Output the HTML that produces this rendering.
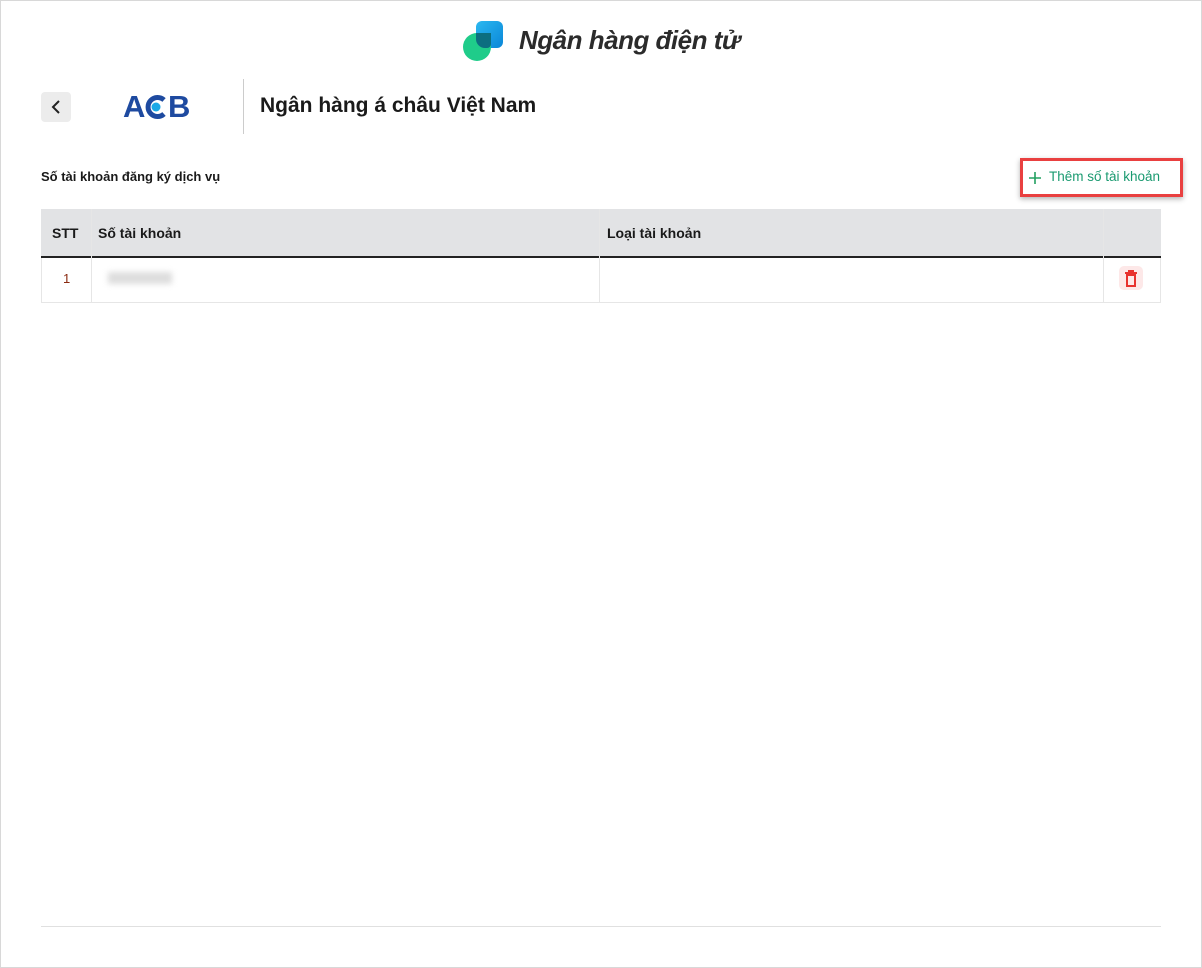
<!DOCTYPE html>
<html><head><meta charset="utf-8"><style>
*{box-sizing:border-box;margin:0;padding:0}
body{width:1202px;height:968px;background:#fff;font-family:"Liberation Sans","DejaVu Sans",sans-serif;position:relative;overflow:hidden;color:#1a1a1a}
.abs{position:absolute}
</style></head><body>
<div class="abs" style="left:0;top:0;width:1202px;height:968px;border:1px solid #d8d8d8"></div>
<div class="abs" style="left:476px;top:21px;width:27px;height:27px;border-radius:6px;background:linear-gradient(135deg,#2bb8f0,#0a86d8)"></div>
<div class="abs" style="left:463px;top:33px;width:28px;height:28px;border-radius:50%;background:#1fcc8a"></div>
<div class="abs" style="left:476px;top:33px;width:15px;height:15px;border-radius:0 0 4px 9px;background:#0c6e80"></div>
<div class="abs" style="left:519px;top:25px;font-size:26px;font-weight:bold;font-style:italic;color:#2b2b2b;letter-spacing:-0.5px">Ngân hàng điện tử</div>

<div class="abs" style="left:41px;top:92px;width:30px;height:30px;background:#ececec;border-radius:4px"></div>
<svg class="abs" style="left:41px;top:92px" width="30" height="30"><path d="M18 9 L12 15 L18 21" stroke="#222" stroke-width="2" fill="none"/></svg>
<div class="abs" style="left:123px;top:89px;font-size:31px;font-weight:bold;color:#1e4aa0;letter-spacing:-1px">A</div>
<svg class="abs" style="left:143px;top:94px" width="26" height="26"><path d="M21 6 A9.5 9.5 0 1 0 21 20" stroke="#1e4aa0" stroke-width="5" fill="none"/><circle cx="13" cy="13" r="4.5" fill="#19a8e6"/></svg>
<div class="abs" style="left:168px;top:89px;font-size:31px;font-weight:bold;color:#1e4aa0">B</div>
<div class="abs" style="left:243px;top:79px;width:1px;height:55px;background:#ccc"></div>
<div class="abs" style="left:260px;top:94px;font-size:21px;font-weight:bold;color:#1a1a1a">Ngân hàng á châu Việt Nam</div>

<div class="abs" style="left:41px;top:169px;font-size:13px;font-weight:bold">Số tài khoản đăng ký dịch vụ</div>
<div class="abs" style="left:1020px;top:158px;width:163px;height:39px;border:3px solid #e94040;box-shadow:0 2px 5px rgba(0,0,0,.3)"></div>
<svg class="abs" style="left:1028px;top:171px" width="14" height="14"><path d="M7 1V13M1 7H13" stroke="#22a060" stroke-width="1.6"/></svg>
<div class="abs" style="left:1049px;top:169px;font-size:13.5px;color:#1a9a70">Thêm số tài khoản</div>

<div class="abs" style="left:41px;top:209px;width:1120px;height:94px;border:1px solid #e6e6e6"></div>
<div class="abs" style="left:41px;top:209px;width:1120px;height:49px;background:#e2e3e5;border-bottom:2px solid #222"></div>
<div class="abs" style="left:91px;top:209px;width:1px;height:94px;background:#e6e6e6"></div>
<div class="abs" style="left:599px;top:209px;width:1px;height:94px;background:#e6e6e6"></div>
<div class="abs" style="left:1103px;top:209px;width:1px;height:94px;background:#e6e6e6"></div>
<div class="abs" style="left:52px;top:225px;font-size:14px;font-weight:bold">STT</div>
<div class="abs" style="left:98px;top:225px;font-size:14px;font-weight:bold">Số tài khoản</div>
<div class="abs" style="left:607px;top:225px;font-size:14px;font-weight:bold">Loại tài khoản</div>
<div class="abs" style="left:63px;top:271px;font-size:13px;color:#8a2a10">1</div>
<div class="abs" style="left:108px;top:272px;width:64px;height:12px;background:#ddd;filter:blur(3px)"></div>
<div class="abs" style="left:1119px;top:266px;width:24px;height:24px;background:#fde8e8;border-radius:5px"></div>
<svg class="abs" style="left:1119px;top:266px" width="24" height="24"><path d="M6 7H18M10 7V5H14V7" stroke="#e8322e" stroke-width="2" fill="none"/><rect x="8" y="9" width="8" height="11" stroke="#e8322e" stroke-width="2" fill="none"/></svg>

<div class="abs" style="left:41px;top:926px;width:1120px;height:1px;background:#e0e0e0"></div>
</body></html>
